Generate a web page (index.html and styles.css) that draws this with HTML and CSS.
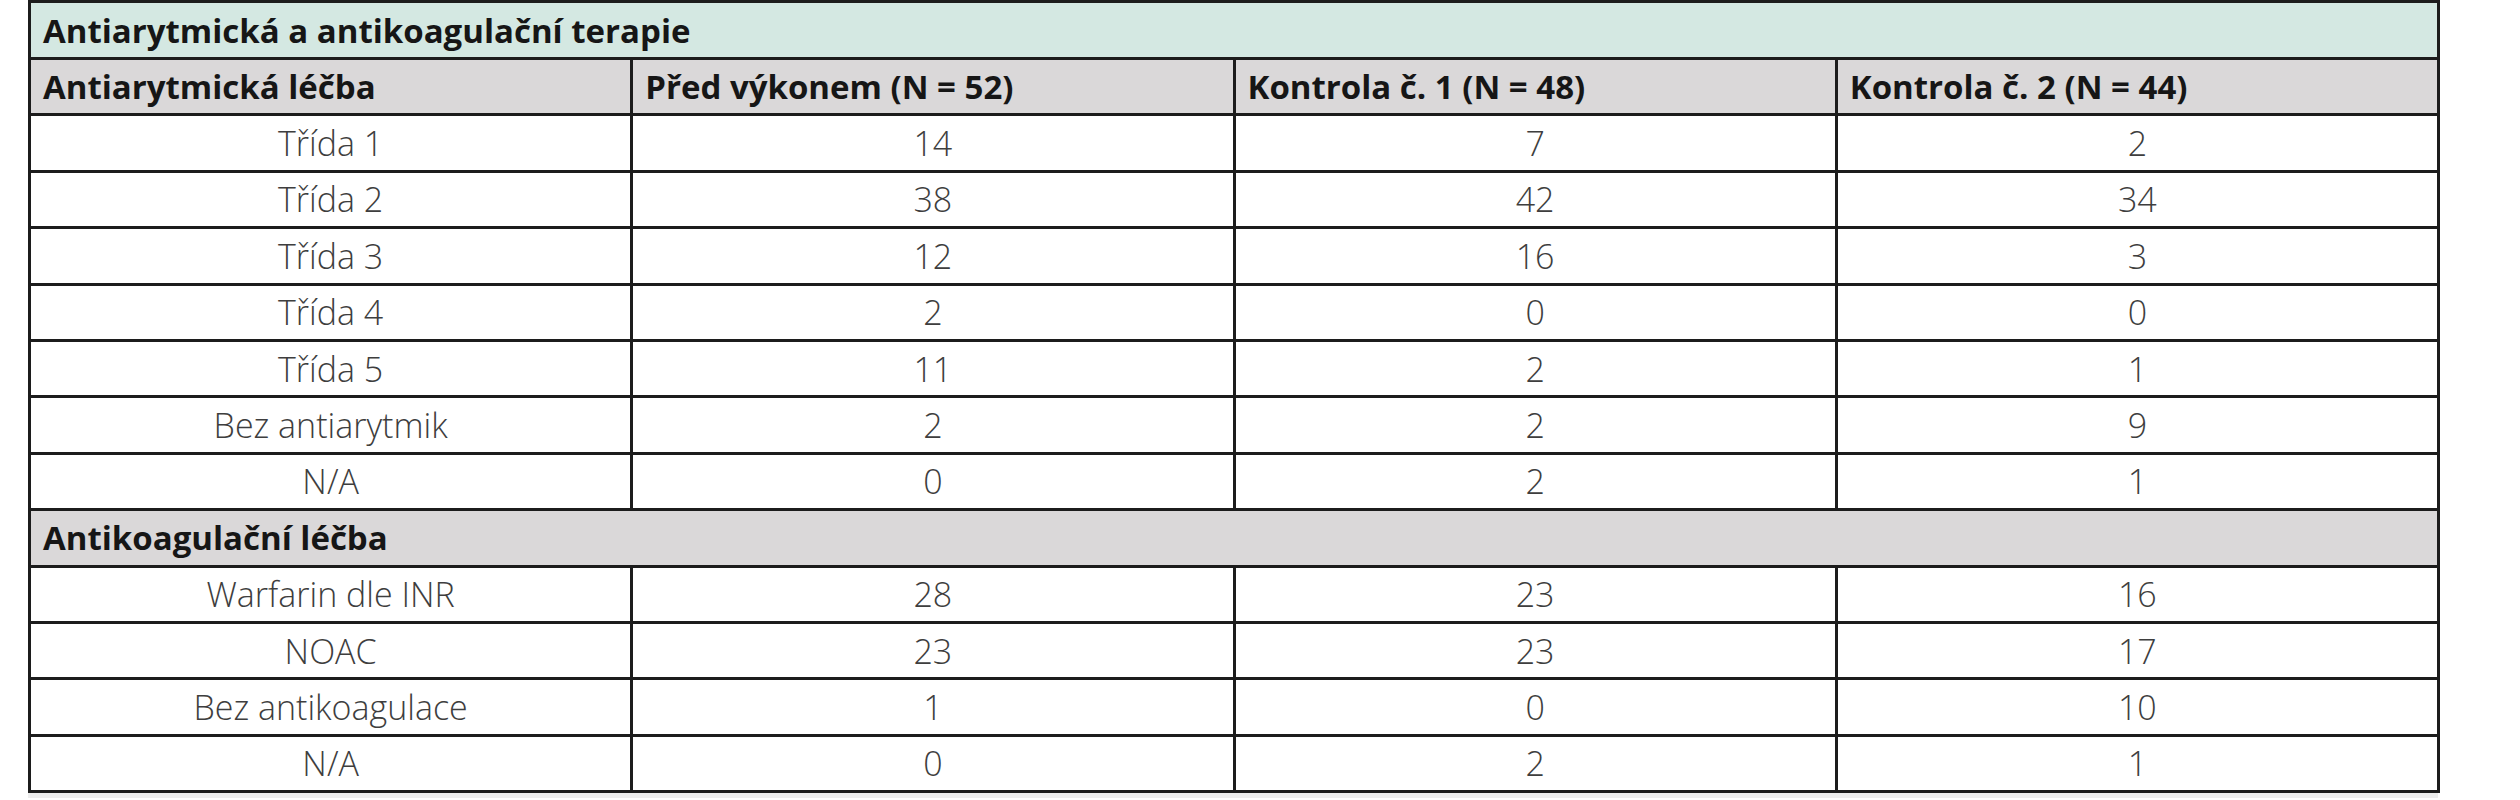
FILE: index.html
```html
<!DOCTYPE html>
<html lang="cs">
<head>
<meta charset="utf-8">
<title>Antiarytmická a antikoagulační terapie</title>
<link rel="stylesheet" href="styles.css">
</head>
<body>
<div class="page">
  <table class="data">
    <colgroup>
      <col class="c"><col class="c"><col class="c"><col class="c">
    </colgroup>
    <tr class="title"><th colspan="4">Antiarytmická a antikoagulační terapie</th></tr>
    <tr class="head">
      <th>Antiarytmická léčba</th>
      <th>Před výkonem (N = 52)</th>
      <th>Kontrola č. 1 (N = 48)</th>
      <th>Kontrola č. 2 (N = 44)</th>
    </tr>
    <tr><td>Třída 1</td><td>14</td><td>7</td><td>2</td></tr>
    <tr><td>Třída 2</td><td>38</td><td>42</td><td>34</td></tr>
    <tr><td>Třída 3</td><td>12</td><td>16</td><td>3</td></tr>
    <tr><td>Třída 4</td><td>2</td><td>0</td><td>0</td></tr>
    <tr><td>Třída 5</td><td>11</td><td>2</td><td>1</td></tr>
    <tr><td>Bez antiarytmik</td><td>2</td><td>2</td><td>9</td></tr>
    <tr><td>N/A</td><td>0</td><td>2</td><td>1</td></tr>
    <tr class="head"><th colspan="4">Antikoagulační léčba</th></tr>
    <tr><td>Warfarin dle INR</td><td>28</td><td>23</td><td>16</td></tr>
    <tr><td>NOAC</td><td>23</td><td>23</td><td>17</td></tr>
    <tr><td>Bez antikoagulace</td><td>1</td><td>0</td><td>10</td></tr>
    <tr><td>N/A</td><td>0</td><td>2</td><td>1</td></tr>
  </table>
  <div class="shadow"></div>
</div>
</body>
</html>
```

FILE: styles.css
```css
html, body {
  margin: 0;
  padding: 0;
  background: #ffffff;
}

.page {
  padding: 0 0 0 28px;
}

.data {
  border-collapse: collapse;
  width: 2412px;
  table-layout: fixed;
  font-family: "Open Sans", "Noto Sans", sans-serif;
}

.data .c {
  width: 25%;
}

.data th,
.data td {
  border: 3px solid #1c1c1c;
  height: 53.4px;
  padding: 0;
  line-height: 1;
}

.data th {
  text-align: left;
  padding-left: 12px;
  font-weight: 700;
  font-size: 33px;
  color: #161616;
  background: #dad8d9;
}

.data .title th {
  background: #d4e8e2;
  height: 54px;
}

.data td {
  text-align: center;
  font-weight: 300;
  font-size: 34px;
  color: #3e3e3e;
  background: #ffffff;
}

.shadow {
  width: 2410px;
  height: 5px;
  background: #ededed;
}
```
